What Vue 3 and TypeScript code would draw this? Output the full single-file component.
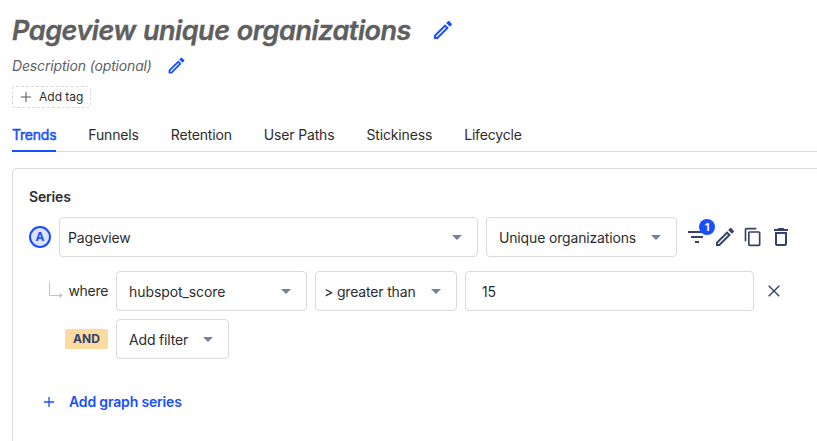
<script setup lang="ts">
import { ref } from 'vue'

const tabs: string[] = ['Trends', 'Funnels', 'Retention', 'User Paths', 'Stickiness', 'Lifecycle']
const activeTab = ref<string>('Trends')
const filterCount = ref<number>(1)
const filterValue = ref<string>('15')

const pencil =
  'M14.06 9.02l.92.92L5.92 19H5v-.92l9.06-9.06M17.66 3c-.25 0-.51.1-.7.29l-1.83 1.83 3.75 3.75 1.83-1.83c.39-.39.39-1.02 0-1.41l-2.34-2.34c-.2-.2-.45-.29-.71-.29zm-3.6 3.19L3 17.25V21h3.75L17.81 9.94l-3.75-3.75z'
</script>

<template>
  <main class="insight">
    <header class="head">
      <div class="title-row">
        <h1>Pageview unique organizations</h1>
        <svg class="icon blue" width="24" height="24" viewBox="0 0 24 24"><path :d="pencil" /></svg>
      </div>
      <div class="desc-row">
        <span class="desc">Description (optional)</span>
        <svg class="icon blue" width="21" height="21" viewBox="0 0 24 24"><path :d="pencil" /></svg>
      </div>
      <button class="tag">
        <svg width="12" height="12" viewBox="0 0 12 12"><path d="M6 .8v10.4M.8 6h10.4" stroke="#555" fill="none" /></svg>
        <span>Add tag</span>
      </button>
    </header>

    <nav class="tabs">
      <a v-for="tab in tabs" :key="tab" class="tab" :class="{ active: tab === activeTab }" @click="activeTab = tab">{{ tab }}</a>
    </nav>

    <section class="panel">
      <h2>Series</h2>
      <div class="row series">
        <span class="letter">A</span>
        <div class="select event"><span>Pageview</span><i class="caret"></i></div>
        <div class="select math"><span>Unique organizations</span><i class="caret"></i></div>
        <div class="actions">
          <span class="filter-btn">
            <svg class="icon" width="24" height="24" viewBox="0 0 24 24"><path d="M10 18h4v-2h-4v2zM3 6v2h18V6H3zm3 7h12v-2H6v2z" /></svg>
            <b class="count">{{ filterCount }}</b>
          </span>
          <svg class="icon" width="24" height="24" viewBox="0 0 24 24"><path :d="pencil" /></svg>
          <svg class="icon copy" width="20" height="20" viewBox="0 0 24 24"><path d="M16 1H4c-1.1 0-2 .9-2 2v14h2V3h12V1zm3 4H8c-1.1 0-2 .9-2 2v14c0 1.1.9 2 2 2h11c1.1 0 2-.9 2-2V7c0-1.1-.9-2-2-2zm0 16H8V7h11v14z" /></svg>
          <svg class="icon" width="24" height="24" viewBox="0 0 24 24"><path d="M6 19c0 1.1.9 2 2 2h8c1.1 0 2-.9 2-2V7H6v12zM8 9h8v10H8V9zm7.500-5l-1-1h-5l-1 1H5v2h14V4h-3.500z" /></svg>
        </div>
      </div>

      <div class="row where-row">
        <div class="prefix">
          <svg class="elbow" width="14" height="17" viewBox="0 0 14 17"><path d="M.5 0v13.500h11" fill="none" stroke="#c4c4c4" /><path d="M10.500 10.800l3.300 2.700-3.300 2.700z" fill="#c4c4c4" /></svg>
          <span>where</span>
        </div>
        <div class="select property"><span>hubspot_score</span><i class="caret"></i></div>
        <div class="select operator"><span>&gt; greater than</span><i class="caret"></i></div>
        <div class="select value"><span>{{ filterValue }}</span></div>
        <svg class="close" width="12" height="12" viewBox="0 0 12 12"><path d="M.7.7l10.600 10.600M11.300.7L.7 11.300" stroke="#35416b" stroke-width="1.400" fill="none" /></svg>
      </div>

      <div class="row and-row">
        <div class="prefix"><span class="and">AND</span></div>
        <div class="select add-filter"><span>Add filter</span><i class="caret"></i></div>
      </div>

      <button class="add-series">
        <svg width="12" height="12" viewBox="0 0 12 12"><path d="M6 1v10M1 6h10" stroke="#174fff" stroke-width="1.300" fill="none" /></svg>
        <span>Add graph series</span>
      </button>
    </section>
  </main>
</template>

<style>
body {
  background: #fff;
  overflow: hidden;
}
</style>

<style scoped>
.insight {
  box-sizing: border-box;
  width: 100%;
  height: 441px;
  padding-left: 12px;
  overflow: hidden;
  display: flex;
  flex-direction: column;
  font-family: Inter, "Liberation Sans", sans-serif;
  font-size: 14px;
  line-height: 20px;
  letter-spacing: -0.16px;
  color: #2d2d2d;
}
.insight * {
  box-sizing: border-box;
  white-space: nowrap;
}
svg {
  flex: none;
  display: block;
}
button {
  font: inherit;
  letter-spacing: inherit;
  background: none;
  padding: 0;
  border: 0;
}
.icon {
  fill: #35416b;
}
.icon.blue {
  fill: #174fff;
}
.head {
  display: flex;
  flex-direction: column;
  align-items: flex-start;
  padding-top: 10px;
}
.title-row {
  display: flex;
  align-items: center;
  height: 40px;
}
h1 {
  flex: none;
  width: 419px;
  margin: 0;
  padding-top: 2px;
  font-size: 27px;
  line-height: 40px;
  font-weight: 600;
  font-style: italic;
  letter-spacing: -0.46px;
  word-spacing: 1px;
  -webkit-text-stroke: 0.4px #5f5f5f;
  color: #5f5f5f;
}
.desc-row {
  display: flex;
  align-items: center;
  height: 32px;
  gap: 14px;
}
.desc-row .icon {
  margin-bottom: 1px;
}
.desc {
  font-style: italic;
  color: #5f5f5f;
}
.tag {
  display: flex;
  align-items: center;
  gap: 7px;
  width: 79px;
  height: 22px;
  margin-top: 4px;
  padding-left: 7px;
  border: 1px dashed #d9d9d9;
  border-radius: 4px;
  font-size: 12px;
  letter-spacing: 0;
  color: #2d2d2d;
}
.tabs {
  display: flex;
  flex: none;
  gap: 32px;
  height: 44px;
  border-bottom: 1px solid #d9d9d9;
}
.tab {
  height: 44px;
  padding-top: 17px;
  border-bottom: 2px solid transparent;
}
.tab.active {
  color: #174fff;
  border-color: #174fff;
  letter-spacing: -0.22px;
  -webkit-text-stroke: 0.5px #174fff;
}
.panel {
  flex: none;
  width: 830px;
  height: 300px;
  margin-top: 16px;
  padding: 18px 16px;
  border: 1px solid #d9d9d9;
  border-radius: 4px;
}
h2 {
  margin: 0 0 10px;
  font-size: 14px;
  line-height: 20px;
  font-weight: 600;
}
.row {
  display: flex;
  align-items: center;
  height: 40px;
  gap: 8px;
}
.letter {
  display: flex;
  align-items: center;
  justify-content: center;
  width: 22px;
  height: 22px;
  border: 2px solid #174fff;
  border-radius: 50%;
  background: #dbe3ff;
  color: #174fff;
  font-size: 12px;
  font-weight: 700;
}
.select {
  display: flex;
  align-items: center;
  justify-content: space-between;
  height: 40px;
  padding: 2px 15px 0 12px;
  border: 1px solid #d9d9d9;
  border-radius: 4px;
}
.caret {
  border: 5px solid transparent;
  border-top-color: #747ea1;
  border-bottom: 0;
  margin-bottom: 2px;
}
.event {
  width: 419px;
  padding-left: 8px;
}
.math {
  width: 191px;
}
.property {
  width: 191px;
  letter-spacing: -0.08px;
}
.operator {
  width: 142px;
  padding-left: 8px;
}
.value {
  width: 289px;
  padding-left: 16px;
}
.add-filter {
  width: 113px;
}
.actions {
  display: flex;
  align-items: center;
  gap: 4px;
}
.copy {
  margin: 0 2px;
}
.filter-btn {
  position: relative;
}
.count {
  position: absolute;
  left: 14px;
  top: -6px;
  width: 16px;
  height: 16px;
  border-radius: 50%;
  background: #174fff;
  color: #fff;
  font-size: 11px;
  line-height: 16px;
  font-weight: 700;
  text-align: center;
}
.where-row {
  margin-top: 14px;
}
.prefix {
  display: flex;
  align-items: center;
  justify-content: flex-end;
  width: 79px;
  gap: 5px;
}
.where-row .prefix {
  letter-spacing: -0.3px;
}
.elbow {
  margin-top: -2px;
}
.close {
  margin-left: 6px;
}
.and-row {
  margin-top: 8px;
}
.and {
  width: 43px;
  height: 20px;
  border-radius: 2px;
  background: #fbdb9f;
  color: #35416b;
  font-size: 12px;
  font-weight: 700;
  letter-spacing: 0;
  text-align: center;
}
.add-series {
  display: flex;
  align-items: center;
  gap: 14px;
  height: 24px;
  margin: 31px 0 0 14px;
  color: #174fff;
  font-weight: 600;
}
</style>
